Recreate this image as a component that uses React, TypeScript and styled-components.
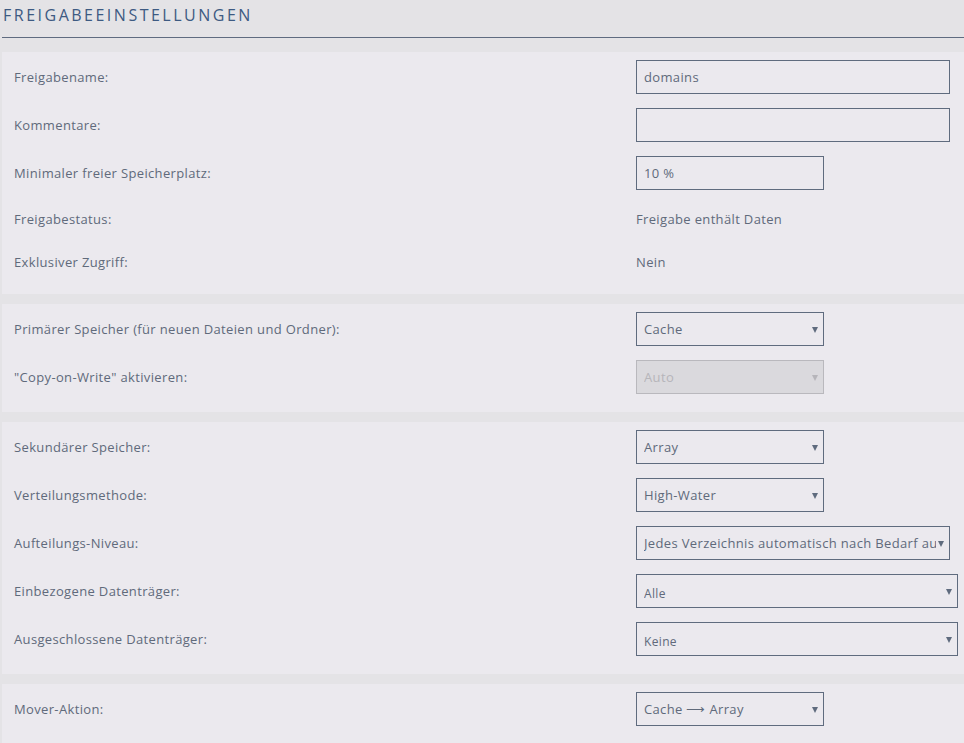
import React, { FC } from "react";
import styled, { createGlobalStyle } from "styled-components";

const GlobalStyle = createGlobalStyle`
  html, body {
    margin: 0;
    padding: 0;
    background: #e4e3e6;
  }
  body {
    font-family: "Open Sans", "Noto Sans", sans-serif;
    color: #606a7b;
  }
`;

const Page = styled.div`
  padding-left: 2px;
  width: 962px;
  overflow: hidden;
`;

const Title = styled.h2`
  margin: 0;
  height: 37px;
  line-height: 31px;
  padding-left: 1px;
  border-bottom: 1px solid #5f6b80;
  font-size: 16px;
  font-weight: 400;
  letter-spacing: 2.5px;
  text-transform: uppercase;
  color: #3d5a82;
`;

const Sections = styled.div`
  margin-top: 14px;
  display: flex;
  flex-direction: column;
  gap: 10px;
`;

const Panel = styled.section`
  background: #ebe9ee;
  padding: 8px 0 4px 12px;
`;

const Row = styled.div<{ $text?: boolean }>`
  display: grid;
  grid-template-columns: 622px 1fr;
  align-items: center;
  height: ${({ $text }) => ($text ? 29 : 34)}px;
  margin-bottom: 14px;
  font-size: 13px;
  letter-spacing: 0.35px;
`;

const Label = styled.div`
  white-space: nowrap;
`;

const Value = styled.div`
  white-space: nowrap;
`;

const TextInput = styled.div<{ $w: number }>`
  box-sizing: border-box;
  width: ${({ $w }) => $w}px;
  height: 34px;
  border: 1px solid #5f6b7e;
  padding: 0 7px;
  display: flex;
  align-items: center;
  font-size: 13px;
  color: #606a7b;
`;

const SelectBox = styled.div<{ $w: number; $disabled?: boolean }>`
  box-sizing: border-box;
  width: ${({ $w }) => $w}px;
  height: 34px;
  border: 1px solid ${({ $disabled }) => ($disabled ? "#b9b8bd" : "#5f6b7e")};
  background: ${({ $disabled }) => ($disabled ? "#dad9dd" : "transparent")};
  color: ${({ $disabled }) => ($disabled ? "#b6b5ba" : "#606a7b")};
  padding: 0 3px 0 7px;
  display: flex;
  align-items: center;
  gap: 2px;
`;

const SelectText = styled.span<{ $small?: boolean }>`
  flex: 1;
  overflow: hidden;
  white-space: nowrap;
  font-size: ${({ $small }) => ($small ? 12 : 13)}px;
  padding-top: ${({ $small }) => ($small ? 4 : 0)}px;
`;

const Arrow = styled.svg<{ $disabled?: boolean }>`
  width: 6px;
  height: 7px;
  flex: none;
  margin-right: 2px;
  fill: ${({ $disabled }) => ($disabled ? "#b6b5ba" : "#5f6b7e")};
`;

type SelectProps = { w: number; value: string; disabled?: boolean; small?: boolean };

const Select: FC<SelectProps> = ({ w, value, disabled, small }) => (
  <SelectBox $w={w} $disabled={disabled}>
    <SelectText $small={small}>{value}</SelectText>
    <Arrow viewBox="0 0 6 7" $disabled={disabled}>
      <path d="M0 1h6L3 7z" />
    </Arrow>
  </SelectBox>
);

const App: FC = () => (
  <Page>
    <GlobalStyle />
    <Title>Freigabeeinstellungen</Title>
    <Sections>
      <Panel>
        <Row>
          <Label>Freigabename:</Label>
          <TextInput $w={314}>domains</TextInput>
        </Row>
        <Row>
          <Label>Kommentare:</Label>
          <TextInput $w={314} />
        </Row>
        <Row>
          <Label>Minimaler freier Speicherplatz:</Label>
          <TextInput $w={188}>10 %</TextInput>
        </Row>
        <Row $text>
          <Label>Freigabestatus:</Label>
          <Value>Freigabe enthält Daten</Value>
        </Row>
        <Row $text>
          <Label>Exklusiver Zugriff:</Label>
          <Value>Nein</Value>
        </Row>
      </Panel>

      <Panel>
        <Row>
          <Label>Primärer Speicher (für neuen Dateien und Ordner):</Label>
          <Select w={188} value="Cache" />
        </Row>
        <Row>
          <Label>"Copy-on-Write" aktivieren:</Label>
          <Select w={188} value="Auto" disabled />
        </Row>
      </Panel>

      <Panel>
        <Row>
          <Label>Sekundärer Speicher:</Label>
          <Select w={188} value="Array" />
        </Row>
        <Row>
          <Label>Verteilungsmethode:</Label>
          <Select w={188} value="High-Water" />
        </Row>
        <Row>
          <Label>Aufteilungs-Niveau:</Label>
          <Select w={314} value="Jedes Verzeichnis automatisch nach Bedarf aufteilen" />
        </Row>
        <Row>
          <Label>Einbezogene Datenträger:</Label>
          <Select w={322} value="Alle" small />
        </Row>
        <Row>
          <Label>Ausgeschlossene Datenträger:</Label>
          <Select w={322} value="Keine" small />
        </Row>
      </Panel>

      <Panel>
        <Row>
          <Label>Mover-Aktion:</Label>
          <Select w={188} value="Cache ⟶ Array" />
        </Row>
      </Panel>
    </Sections>
  </Page>
);

export default App;
